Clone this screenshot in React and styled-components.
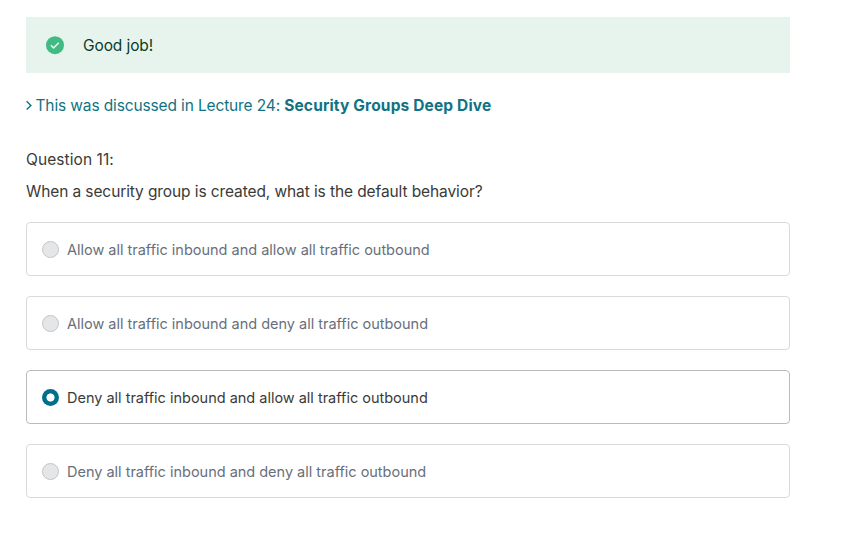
import React from 'react';
import styled, { createGlobalStyle } from 'styled-components';

const GlobalStyle = createGlobalStyle`
  * { box-sizing: border-box; }
  body { margin: 0; background: #fff; font-family: Inter, sans-serif; }
  #root { overflow: hidden; }
`;

const Page = styled.main`
  width: 816px;
  height: 534px;
  padding: 17px 26px 0;
  font-size: 15.5px;
  font-weight: 400;
  letter-spacing: -0.1px;
  color: #3a3a38;
`;

const Banner = styled.div`
  display: flex;
  align-items: center;
  gap: 18px;
  height: 56px;
  padding-left: 19px;
  background: #e6f4ed;
  color: #0b3c26;
`;

const LectureLink = styled.div`
  display: flex;
  align-items: center;
  height: 20px;
  margin-top: 22px;
  color: #0f7384;
  white-space: pre;
  letter-spacing: -0.135px;
`;

const Strong = styled.strong`
  font-weight: 700;
  letter-spacing: 0.15px;
`;

const QuestionLabel = styled.div`
  margin-top: 35px;
  line-height: 20px;
  letter-spacing: 0.08px;
`;

const QuestionText = styled.div`
  margin-top: 12px;
  line-height: 20px;
`;

const Answers = styled.div`
  display: grid;
  gap: 20px;
  margin-top: 20px;
`;

const Answer = styled.div`
  display: flex;
  align-items: center;
  gap: 8px;
  height: 54px;
  padding-left: 15px;
  border: 1px solid ${(p) => (p.$selected ? '#bcbcbc' : '#dadada')};
  border-radius: 4px;
  color: ${(p) => (p.$selected ? '#3a3a38' : '#686f7a')};
  font-size: 14.5px;
  letter-spacing: -0.01px;
`;

const Radio = styled.span`
  width: 17px;
  height: 17px;
  border-radius: 50%;
  border: ${(p) => (p.$selected ? 'none' : '1px solid #c4c5c6')};
  background: ${(p) => (p.$selected ? 'radial-gradient(circle, #fff 3.6px, #00708a 4.5px)' : '#e5e6e8')};
`;

const answers = [
  'Allow all traffic inbound and allow all traffic outbound',
  'Allow all traffic inbound and deny all traffic outbound',
  'Deny all traffic inbound and allow all traffic outbound',
  'Deny all traffic inbound and deny all traffic outbound',
];

export default function App() {
  return (
    <Page>
      <GlobalStyle />
      <Banner>
        <svg width="20" height="20" viewBox="0 0 20 20" fill="none">
          <circle cx="10" cy="10.2" r="9" fill="#41bb83" />
          <path d="M5.9 10.2l2.7 2.7 5.2-5.2" stroke="#e6f4ed" strokeWidth="1.5" />
        </svg>
        <span>Good job!</span>
      </Banner>
      <LectureLink>
        <svg width="9.5" height="12" viewBox="0 0 9.5 12" fill="none">
          <path d="M0.6 2.2l4.3 4.2-4.3 4.2" stroke="currentColor" strokeWidth="1.4" />
        </svg>
        <span>This was discussed in Lecture 24: <Strong>Security Groups Deep Dive</Strong></span>
      </LectureLink>
      <QuestionLabel>Question 11:</QuestionLabel>
      <QuestionText>When a security group is created, what is the default behavior?</QuestionText>
      <Answers>
        {answers.map((text, i) => (
          <Answer key={text} $selected={i === 2}>
            <Radio $selected={i === 2} />
            <span>{text}</span>
          </Answer>
        ))}
      </Answers>
    </Page>
  );
}
